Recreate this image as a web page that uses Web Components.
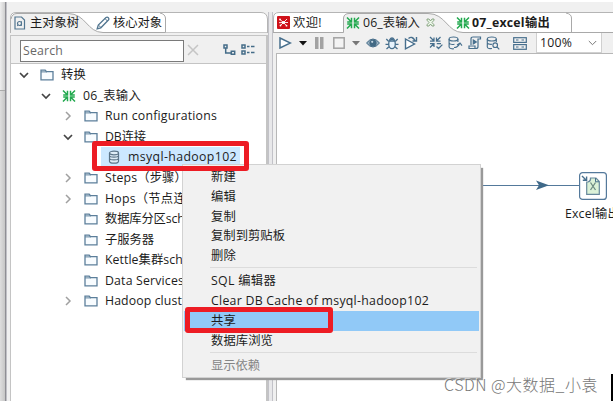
<!DOCTYPE html>
<html lang="zh"><head><meta charset="utf-8"><title>Transformation workspace</title>
<style>
html,body{margin:0;width:613px;height:401px;overflow:hidden;background:#f0f0f0}
body{font:12.3px/20px "Open Sans","Noto Sans CJK SC",sans-serif;color:#1c1c1c}
</style></head><body><app-window></app-window>
<script>
const icons={
folder:['0 0 14 12','<path d="M1 10.8V1.2H5.2L6.5 2.7H13V10.8Z" fill="#f8fcff" stroke="#5c7f9b" stroke-width="1.3"/><path d="M1 2.9H7" stroke="#5c7f9b"/>'],
trans:['0 0 14 14','<g fill="none" stroke="currentColor" stroke-width="1.5"><path d="M1 1.5L5.2 5.7M5.5 1.8V6H1.2M13 1.5L8.8 5.7M8.5 1.8V6H12.8M1 12.5L5.2 8.3M5.5 12.2V8H1.2M13 12.5L8.8 8.3M8.5 12.2V8H12.8"/></g>'],
open:['0 0 10 10','<path d="M1 3L5 7L9 3" fill="none" stroke="#444" stroke-width="1.7"/>'],
shut:['0 0 10 10','<path d="M3 1L7 5L3 9" fill="none" stroke="#a0a0a0" stroke-width="1.5"/>'],
db:['0 0 12 14','<g fill="#deedf7" stroke="#5b7488" stroke-width="1.2"><path d="M1.5 3V11.2C1.5 13.8 10.5 13.8 10.5 11.2V3"/><ellipse cx="6" cy="3" rx="4.5" ry="1.8"/><path d="M1.5 5.8C2 7.5 10 7.5 10.5 5.8M1.5 8.6C2 10.3 10 10.3 10.5 8.6" fill="none"/></g>'],
page:['0 0 12 14','<g fill="none" stroke="#527690" stroke-width="1.2"><path d="M1 1H7.5L10.5 4V13H1Z"/><circle cx="5.5" cy="7.5" r="2"/><path d="M7.5 5.3V9.8M3 10L4.2 9" stroke-width="1"/></g>'],
pencil:['0 0 14 14','<path d="M1.2 12.8L2.3 9L10 1.6Q11.2.6 12.4 1.8Q13.4 3 12.2 4.2L4.8 11.8Z" fill="#fff" stroke="#527690" stroke-width="1.3"/><path d="M2.4 9L5 11.6M9 2.5L11.4 5" stroke="#527690"/>'],
x:['0 0 12 12','<path d="M1 1L11 11M11 1L1 11" stroke="#c5c5c5" stroke-width="1.5"/>'],
tree:['0 0 13 12','<g fill="none" stroke="#446c88" stroke-width="1.5"><path d="M1 1H4V4H1ZM8.3 7.3H11.7V10.3H8.3ZM2.7 4.5V9H8"/></g>'],
list:['0 0 14 12','<path d="M1 1H4V4H1ZM1 7H4V10H1ZM6 2.5H8.5M10 2.5H13.5M6 8.5H8.5M10 8.5H13.5" fill="none" stroke="#446c88" stroke-width="1.5"/>'],
welcome:['0 0 13 13','<rect width="13" height="13" rx="1" fill="#cf1119"/><g stroke="#fff" stroke-width=".9"><path d="M6.5 6.5L3 3.5M6.5 6.5L10 3M6.5 6.5H11M6.5 6.5L9.5 9.7M6.5 6.5L3.5 9.5M6.5 6.5L2 6.7"/></g><circle cx="6.5" cy="6.5" r="1.6" fill="#fff"/><circle cx="3" cy="3.5" r=".9" fill="#fff"/><circle cx="3.5" cy="9.5" r=".9" fill="#fff"/><circle cx="9.5" cy="9.7" r=".9" fill="#fff"/>'],
close:['0 0 9 9','<path d="M1 1H3L4.5 3L6 1H8V2.2L6 4.5L8 6.8V8H6L4.5 6L3 8H1V6.8L3 4.5L1 2.2Z" fill="#edf7ea" stroke="#71936b" stroke-width=".8"/>'],
play:['0 0 13 12','<path d="M1 1L11.5 6L1 11Z" fill="#fff" stroke="#476f8d" stroke-width="1.5"/>'],
down:['0 0 8 5','<path d="M0 0H8L4 4.6Z" fill="currentColor"/>'],
pause:['0 0 9 12','<path d="M0 0H3.5V12H0ZM5 0H8.5V12H5Z" fill="#a2a2a2"/>'],
stop:['0 0 12 12','<rect x=".8" y=".8" width="10.4" height="10.4" fill="#f3f3f3" stroke="#a2a2a2" stroke-width="1.5"/>'],
eye:['0 0 14 10','<path d="M.5 5Q7-3 13.5 5Q7 13 .5 5Z" fill="#9bb2c2" stroke="#456c88"/><circle cx="7" cy="5" r="3.6" fill="#426984"/><circle cx="6.2" cy="3.8" r="1.1" fill="#c6d7e2"/>'],
bug:['0 0 14 14','<g fill="none" stroke="#476f8d" stroke-width="1.3"><ellipse cx="7" cy="8" rx="3.3" ry="4.6" fill="#e7f3fc"/><path d="M4.5 4Q7 0 9.5 4M3.8 5.5L1.3 3M10.2 5.5L12.7 3M3.7 8.3H.5M10.3 8.3H13.5M4 10.8L1.5 13M10 10.8L12.5 13M4.5 5H9.5"/></g>'],
replay:['0 0 14 14','<g fill="none" stroke="#476f8d" stroke-width="1.4"><path d="M1.5 3L10.5 8L1.5 12.8Z" fill="#fff"/><path d="M4.5 2.5Q8-.5 11 4.5M12.5 1V5H8.5"/></g>'],
verify:['0 0 14 14','<g fill="none" stroke="#476f8d" stroke-width="1.25"><path d="M1 1L4.5 4.5M5 1.5V5H1M11.5 1L8 4.5M7.5 1.5V5H11.5M1 11.5L4.5 8M5 11V7.5H1M12 7.5H7.8M7.5 10.5L9.5 12.5L13.4 8.6"/></g>'],
dbrun:['0 0 15 14','<g fill="none" stroke="#476f8d" stroke-width="1.15"><ellipse cx="5.5" cy="3" rx="4.4" ry="2"/><path d="M1.1 3V11C1.3 12.6 4 13 6 12.7M9.9 3V6M1.1 7C2 8.5 4.5 8.7 6.5 8.3M6 11.5Q10 11.5 11.5 7.7M9 9L12 7L14 9.7"/></g>'],
script:['0 0 14 14','<g fill="none" stroke="#476f8d" stroke-width="1.2"><path d="M3 9V3Q3 1 5 1H12.5V3H10V10.5Q10 12.5 8 12.5H1V10H7V12"/><path d="M5.3 4L8.3 6L5.3 8Z" fill="#476f8d"/></g>'],
dbfind:['0 0 14 14','<g fill="none" stroke="#476f8d" stroke-width="1.15"><ellipse cx="5.8" cy="3" rx="4.5" ry="2"/><path d="M1.3 3V11C1.5 12.7 4 12.8 6 12.5M10.3 3V6M1.3 7C2 8 4 8.5 6 8.3"/><circle cx="9.2" cy="9.2" r="2.3"/><path d="M11 11L13.3 13.3"/></g>'],
rows:['0 0 14 13','<g fill="none" stroke="#476f8d" stroke-width="1.2"><rect x=".7" y=".7" width="12.6" height="4.7"/><rect x=".7" y="7.6" width="12.6" height="4.7"/><path d="M3 3H5.5M8.5 3H11M3 10H5.5M8.5 10H11"/></g>'],
chev:['0 0 9 6','<path d="M.8 1L4.5 4.7L8.2 1" fill="none" stroke="#777"/>'],
excel:['0 0 28 28','<rect x=".6" y=".6" width="26.8" height="26.8" rx="3" fill="#fff" stroke="#54799b" stroke-width="1.2"/><path d="M3 4L7 8M7.6 4.5V8.3H3.8" fill="none" stroke="#476f8d" stroke-width="1.4"/><path d="M7.7 10V22.3H20.3V9.5L17 6H11.5Q12 9 9 10Z" fill="#dcf2d8" stroke="#68899c" stroke-width="1.2"/><path d="M16.5 6V9.8H20" fill="none" stroke="#476f8d"/><path d="M11.5 10.5L16.5 18M16.5 10.5L11.5 18" stroke="#6d8b82" stroke-width="1.3"/>']
};
function define(name,css,html,after){
 customElements.define(name,class extends HTMLElement{
  constructor(){super();this.attachShadow({mode:'open'})}
  connectedCallback(){if(this.shadowRoot.childNodes.length)return;
   const t=document.createElement('template');
   t.innerHTML='<style>'+css+'</style>'+(typeof html==='function'?html(this):html);
   this.shadowRoot.append(t.content.cloneNode(true));if(after)after(this)}
 });
}
define('ui-icon',':host{display:block;flex:none}svg{display:block;width:100%;height:100%}',e=>{const i=icons[e.getAttribute('name')];return `<svg viewBox="${i[0]}">${i[1]}</svg>`},
 e=>{const [, ,w,h]=icons[e.getAttribute('name')][0].split(' ');e.style.width=w+'px';e.style.height=h+'px'});
// A label that spreads its letters to fill the requested advance width.
define('fit-text',':host{display:block;flex:none;white-space:nowrap}span{display:inline-block;white-space:pre}',e=>`<span>${e.getAttribute('text')}</span>`,e=>{
 const s=e.shadowRoot.querySelector('span'),w=+e.getAttribute('width');
 if(w){s.style.letterSpacing=(w-s.getBoundingClientRect().width)/[...e.getAttribute('text')].length+'px'}});
define('tree-row',`:host{display:flex;align-items:center;height:20.55px;flex:none}
 .arrow{width:10px;margin-right:11px}.icon{width:14px;display:flex;justify-content:center;margin-right:7px}ui-icon[name=trans]{color:#21a94e}
 .sel{display:flex;align-items:center;background:#cce8ff;height:20px;padding:0 3px 0 6px}.sel .icon{margin-right:7px}`,
 e=>{const a=e.getAttribute('arrow'),sel=e.hasAttribute('selected');
 return `<div style="width:${e.getAttribute('indent')}px"></div><div class="arrow">${a?`<ui-icon name="${a}"></ui-icon>`:''}</div><div class="${sel?'sel':''}" style="display:flex;align-items:center"><div class="icon"><ui-icon name="${e.getAttribute('icon')}"></ui-icon></div><fit-text text="${e.getAttribute('label')}" width="${e.getAttribute('w')}"></fit-text></div>`});
define('tab-strip',':host{display:grid;height:21px;flex:none}:host>*{grid-area:1/1}svg{width:100%;height:21px;display:block}.tabs{display:flex;align-items:center;height:21px;z-index:1;line-height:21px}',
 e=>(e.getAttribute('side')==='left'?
 `<svg><path d="M.5 21V6Q.5 .5 6 .5H251Q257 .5 257.5 7V21Z" fill="#fff" stroke="#b5b5b5"/><path d="M1 21V7Q2 1.5 7 1.5H58C76 1.5 77 20.5 93 20.5H257V21Z" fill="#f0f0f0"/><path d="M1 7Q2 1.5 7 1.5H58C76 1.5 77 20.5 93 20.5H155.5V6Q155 2 150 1" fill="none" stroke="#a9a9a9"/><path d="M156 20.5H257" stroke="#c9c9c9"/></svg>`:
 `<svg><path d="M.5 21V6Q.5 .5 6 .5H341V21Z" fill="#fff" stroke="#b5b5b5"/><path d="M70.5 21V6Q71 1.5 76 1.5H155C173 1.5 174 20.5 190 20.5V21Z" fill="#f0f0f0"/><path d="M0 20.5H70.5V6Q71 1.5 76 1.5H155C173 1.5 174 20.5 190 20.5H341M293 1Q298.5 2 298.5 6V20.5" fill="none" stroke="#a9a9a9"/></svg>`)+'<div class="tabs"><slot></slot></div>');
define('objects-panel',`:host{display:flex;flex-direction:column;width:258px;height:389px}
 .body{box-sizing:border-box;flex:1;min-height:0;margin-top:2px;border:1px solid #c4c4c4;border-width:1px 2px 0 1px;display:flex;flex-direction:column}
 .bar{height:27px;display:flex;align-items:center;flex:none;border-bottom:1px solid #c4c4c4;padding-left:9px}
 .field{box-sizing:border-box;width:164px;height:22px;border:1px solid #7a7a7a;background:#fff;color:#686868;padding-left:2px;line-height:20px;margin-top:2px}
 .tree{background:#fff;flex:1;padding-top:1px;overflow:hidden}`,
 `<tab-strip side="left"><ui-icon name="page" style="margin:0 4px 0 4px"></ui-icon><fit-text text="主对象树" width="49"></fit-text><ui-icon name="pencil" style="margin:0 3px 0 17px"></ui-icon><fit-text text="核心对象" width="49"></fit-text></tab-strip>
 <div class="body"><div class="bar"><div class="field"><fit-text text="Search" width="40"></fit-text></div><ui-icon name="x" style="margin-left:3px"></ui-icon><ui-icon name="tree" style="margin-left:24px"></ui-icon><ui-icon name="list" style="margin-left:5px"></ui-icon></div>
 <div class="tree">
 <tree-row indent="8" arrow="open" icon="folder" label="转换" w="25"></tree-row>
 <tree-row indent="30" arrow="open" icon="trans" label="06_表输入" w="58"></tree-row>
 <tree-row indent="52" arrow="shut" icon="folder" label="Run configurations" w="112"></tree-row>
 <tree-row indent="52" arrow="open" icon="folder" label="DB连接" w="41"></tree-row>
 <tree-row indent="69" icon="db" label="msyql-hadoop102" w="109" selected></tree-row>
 <tree-row indent="52" arrow="shut" icon="folder" label="Steps（步骤）" w="82"></tree-row>
 <tree-row indent="52" arrow="shut" icon="folder" label="Hops（节点连接）" w="106"></tree-row>
 <tree-row indent="52" icon="folder" label="数据库分区schemas" w="110"></tree-row>
 <tree-row indent="52" icon="folder" label="子服务器" w="49"></tree-row>
 <tree-row indent="52" icon="folder" label="Kettle集群schemas" w="109"></tree-row>
 <tree-row indent="52" icon="folder" label="Data Services" w="79"></tree-row>
 <tree-row indent="52" arrow="shut" icon="folder" label="Hadoop clusters" w="95"></tree-row>
 </div></div>`);
define('editor-panel',`:host{display:flex;flex-direction:column;flex:1;height:389px;min-width:0}
 ui-icon[name=trans]{color:#21a94e}.bar{height:20px;display:flex;align-items:center;padding-left:6px;flex:none}
 .zoom{box-sizing:border-box;width:66px;height:20px;display:flex;align-items:center;justify-content:space-between;background:#fff;border:1px solid #d0d0d0;border-top:0;margin-left:9px;padding:0 4px 0 3px}
 .canvas{flex:1;background:#fff;border:1px solid #b7b7b7;border-width:1px 0 0 1px;margin-left:3px;position:relative;overflow:hidden}
 .line{position:absolute;left:170px;top:124px;width:135px;height:15px}.step{position:absolute;left:302px;top:118px}.name{position:absolute;left:288px;top:150px}`,
 `<tab-strip side="right"><ui-icon name="welcome" style="margin:0 3px 0 4px"></ui-icon><fit-text text="欢迎!" width="29"></fit-text><ui-icon name="trans" style="margin:0 3px 0 24px"></ui-icon><fit-text text="06_表输入" width="57"></fit-text><ui-icon name="close" style="margin-left:6px"></ui-icon><ui-icon name="trans" style="margin:0 2px 0 21px"></ui-icon><fit-text style="font-weight:700" text="07_excel输出" width="78"></fit-text></tab-strip>
 <div class="bar"><ui-icon name="play"></ui-icon><ui-icon name="down" style="color:#111;margin-left:7px"></ui-icon><ui-icon name="pause" style="margin-left:8px"></ui-icon><ui-icon name="stop" style="margin-left:9px"></ui-icon><ui-icon name="down" style="color:#777;margin-left:7px"></ui-icon><ui-icon name="eye" style="margin-left:6px"></ui-icon><ui-icon name="bug" style="margin-left:5px"></ui-icon><ui-icon name="replay" style="margin-left:5px"></ui-icon><ui-icon name="verify" style="margin-left:11px"></ui-icon><ui-icon name="dbrun" style="margin-left:5px"></ui-icon><ui-icon name="script" style="margin-left:5px"></ui-icon><ui-icon name="dbfind" style="margin-left:4px"></ui-icon><ui-icon name="rows" style="margin-left:13px"></ui-icon><div class="zoom"><fit-text text="100%" width="32"></fit-text><ui-icon name="chev"></ui-icon></div></div>
 <div class="canvas"><svg class="line"><path d="M0 7.5H135" stroke="#54799b"/><path d="M89 2.5L102 7.2L89 12L92 7.2Z" fill="#3f6989"/></svg><ui-icon class="step" name="excel"></ui-icon><fit-text class="name" text="Excel输出" width="55"></fit-text></div>`);
define('menu-item',':host{display:flex;align-items:center;height:19.8px;padding-left:27px;flex:none}:host([hot]){background:#91c9f7}:host([off]){color:#858585}',e=>`<fit-text text="${e.getAttribute('label')}" width="${e.getAttribute('w')}"></fit-text>`);
define('context-menu',`:host{box-sizing:border-box;width:299px;height:214px;border:1px solid #d2d2d2;background:#f1f1f1;box-shadow:3px 3px 1px -1px #999;padding:2px 1px;display:flex;flex-direction:column}
 hr{box-sizing:border-box;width:267px;height:5.5px;border:0;border-bottom:1px solid #dcdcdc;margin:-3px 0 3px 26px;flex:none}`,
 `<menu-item label="新建" w="25"></menu-item><menu-item label="编辑" w="25"></menu-item><menu-item label="复制" w="25"></menu-item><menu-item label="复制到剪贴板" w="74"></menu-item><menu-item label="删除" w="25"></menu-item><hr><menu-item label="SQL 编辑器" w="65"></menu-item><menu-item label="Clear DB Cache of msyql-hadoop102" w="218"></menu-item><menu-item hot label="共享" w="25"></menu-item><menu-item label="数据库浏览" w="62"></menu-item><hr><menu-item off label="显示依赖" w="49"></menu-item>`);
define('app-window',`:host{display:block;position:relative;width:613px;height:401px;overflow:hidden}
 .shell{display:flex;box-sizing:border-box;height:401px;border-top:2px solid #fff;padding-top:10px;background:#f0f0f0}
 .edge{width:5px;margin-top:-10px;background:linear-gradient(90deg,#dedede,#c6c6c6);border-right:1px solid #8f8f94;box-shadow:1px 0 #c0c0c6}
 .edge:before{content:"";display:block;height:88px;background:linear-gradient(90deg,#efefef,#cfcfcf);border-bottom:1px solid #aaa}
 objects-panel{margin-left:4px;border-left:0}.sash{width:5px;background:#e8e8ea;box-sizing:border-box;border-left:1px solid #c2c2c8;border-right:1px solid #c2c2c8}
 context-menu{position:absolute;left:182px;top:164px}.mark{position:absolute;box-sizing:border-box;border:5px solid #ed1c24;border-radius:3px}
 .one{left:92px;top:141px;width:157px;height:30px}.two{left:185px;top:307px;width:148px;height:26px}
 .sign{position:absolute;left:444px;top:373px;font:300 16px/22px "Noto Sans CJK SC",sans-serif;color:#777;text-shadow:-1px -1px #fff9}
 .caret{position:absolute;left:611px;top:374px;width:2px;height:27px;background:#000}`,
 `<div class="shell"><div class="edge"></div><objects-panel></objects-panel><div class="sash"></div><editor-panel></editor-panel></div>
 <context-menu></context-menu><div class="mark one"></div><div class="mark two"></div><fit-text class="sign" text="CSDN @大数据_小袁" width="154"></fit-text><div class="caret"></div>`);
</script></body></html>
